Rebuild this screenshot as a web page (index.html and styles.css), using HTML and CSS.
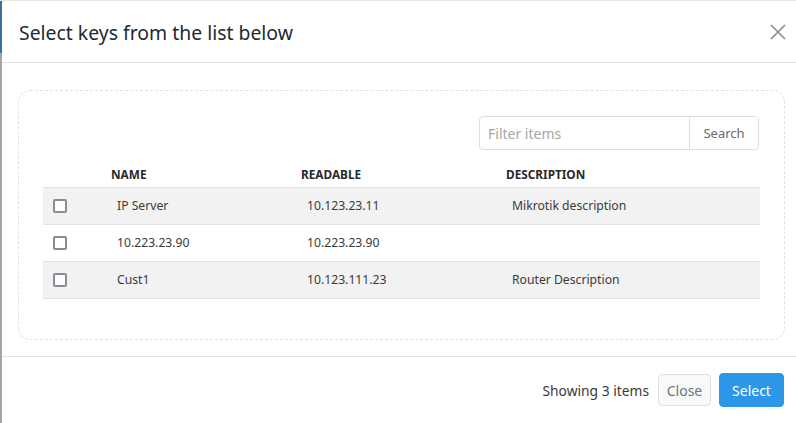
FILE: index.html
```html
<!DOCTYPE html>
<html>
<head>
<meta charset="utf-8">
<link rel="stylesheet" href="styles.css">
</head>
<body>
<div class="page">
  <div class="edge"></div>
  <div class="modal">
    <div class="modal-header">
      <h5 class="modal-title">Select keys from the list below</h5>
      <button class="close-x" aria-label="Close">
        <svg width="16" height="16" viewBox="0 0 16 16"><path d="M1 1 L15 15 M15 1 L1 15" stroke="#8a8a8a" stroke-width="1.6" fill="none"/></svg>
      </button>
    </div>
    <div class="modal-body">
      <div class="dropzone">
        <div class="toolbar">
          <div class="input-group">
            <input class="filter" type="text" placeholder="Filter items">
            <button class="search-btn">Search</button>
          </div>
        </div>
        <table class="keys">
          <thead>
            <tr><th class="c-check"></th><th class="c-name">NAME</th><th class="c-read">READABLE</th><th class="c-desc">DESCRIPTION</th></tr>
          </thead>
          <tbody>
            <tr class="odd"><td class="c-check"><span class="cb"></span></td><td>IP Server</td><td>10.123.23.11</td><td>Mikrotik description</td></tr>
            <tr><td class="c-check"><span class="cb"></span></td><td>10.223.23.90</td><td>10.223.23.90</td><td></td></tr>
            <tr class="odd"><td class="c-check"><span class="cb"></span></td><td>Cust1</td><td>10.123.111.23</td><td>Router Description</td></tr>
          </tbody>
        </table>
      </div>
    </div>
    <div class="modal-footer">
      <span class="count">Showing 3 items</span>
      <button class="btn btn-light">Close</button>
      <button class="btn btn-primary">Select</button>
    </div>
  </div>
</div>
</body>
</html>
```
FILE: styles.css
```css
* { box-sizing: border-box; }
html, body { margin: 0; padding: 0; }
body {
  background: #ebe8e1;
  font-family: "Noto Sans", "Open Sans", sans-serif;
  color: #333;
  width: 796px;
  height: 423px;
  overflow: hidden;
}
.page {
  display: flex;
  padding-top: 1px;
  height: 423px;
}
.edge {
  width: 2px;
  flex: none;
  background: linear-gradient(to bottom, #3f6f9c 0, #3f6f9c 52px, #a4a4a4 52px, #a4a4a4 100%);
}
.modal {
  flex: 1;
  background: #fff;
  border-top-left-radius: 4px;
  display: flex;
  flex-direction: column;
}
.modal-header {
  height: 62px;
  border-bottom: 1px solid #e3e3e3;
  display: flex;
  align-items: center;
  justify-content: space-between;
  padding: 0 10px 0 17px;
}
.modal-title {
  margin: 0;
  font-size: 19.4px;
  font-weight: 400;
  color: #252a31;
  padding-top: 2px;
}
.close-x {
  border: 0;
  background: none;
  padding: 0;
  width: 16px;
  height: 16px;
  display: flex;
}
.modal-body {
  padding: 27px 11px 16px 16px;
  height: 294px;
  border-bottom: 1px solid #e3e3e3;
}
.dropzone {
  border: 1.5px dashed #e2e2e2;
  border-radius: 12px;
  height: 250px;
  padding: 25px 24px 0 24px;
}
.toolbar {
  display: flex;
  justify-content: flex-end;
  padding-right: 1px;
}
.input-group {
  display: flex;
  height: 34px;
  width: 280px;
  border: 1px solid #dedede;
  border-radius: 4px;
}
.filter {
  flex: 1;
  min-width: 0;
  border: 0;
  border-right: 1px solid #dedede;
  padding: 0 8px;
  font: inherit;
  font-size: 14px;
  color: #333;
  background: transparent;
  outline: none;
}
.filter::placeholder { color: #a6a6a6; }
.search-btn {
  width: 68px;
  border: 0;
  background: #fff;
  font: inherit;
  font-size: 13px;
  color: #6b6b6b;
  border-radius: 0 4px 4px 0;
}
.keys {
  width: 100%;
  border-collapse: collapse;
  margin-top: 14px;
  font-size: 12.2px;
}
.keys th {
  text-align: left;
  font-size: 11.8px;
  font-weight: 700;
  color: #2a2a2a;
  height: 23px;
  vertical-align: top;
  padding: 2px 0 0 4px;
  border-bottom: 1px solid #e3e3e3;
}
.keys td {
  height: 37px;
  padding: 0 0 0 10px;
  border-bottom: 1px solid #e3e3e3;
  color: #3a3a3a;
}
.keys tr.odd td { background: #f2f2f2; }
.keys .c-check { width: 64px; padding-left: 10px; }
.keys th.c-check { padding: 0; }
.keys .c-name { width: 190px; }
.keys .c-read { width: 205px; }
.cb {
  display: block;
  width: 14px;
  height: 14px;
  border: 2px solid #8b8a98;
  border-radius: 2px;
  background: #fff;
}
.modal-footer {
  flex: 1;
  display: flex;
  align-items: center;
  justify-content: flex-end;
  padding: 0 12px 0 0;
  gap: 8px;
}
.count {
  font-size: 13.8px;
  color: #3a3a3a;
  margin-right: 1px;
}
.btn {
  font: inherit;
  font-size: 14px;
  border-radius: 4px;
}
.btn-light {
  height: 32px;
  width: 53px;
  padding: 0;
  background: #f8f9fa;
  border: 1px solid #e0e0e0;
  color: #6c757d;
}
.btn-primary {
  height: 34px;
  width: 65px;
  padding: 0;
  background: #2c96e8;
  border: 1px solid #2c96e8;
  color: #fff;
}
```
